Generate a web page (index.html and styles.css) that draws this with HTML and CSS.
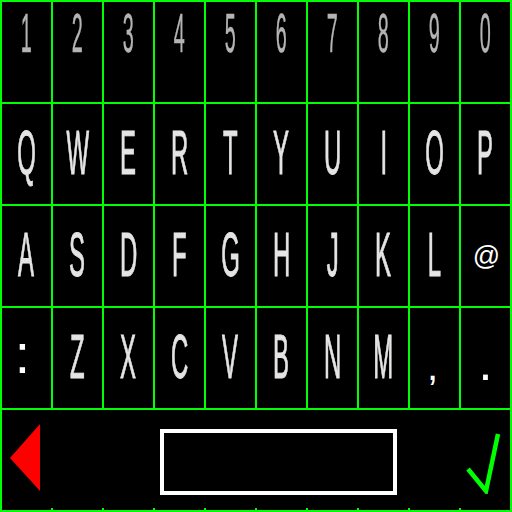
FILE: index.html
```html
<!DOCTYPE html>
<html>
<head>
<meta charset="utf-8">
<link rel="stylesheet" href="styles.css">
</head>
<body>
<div class="kb">
  <div class="key num"><span>1</span></div>
  <div class="key num"><span>2</span></div>
  <div class="key num"><span>3</span></div>
  <div class="key num"><span>4</span></div>
  <div class="key num"><span>5</span></div>
  <div class="key num"><span>6</span></div>
  <div class="key num"><span>7</span></div>
  <div class="key num"><span>8</span></div>
  <div class="key num"><span>9</span></div>
  <div class="key num"><span>0</span></div>

  <div class="key let"><span>Q</span></div>
  <div class="key let"><span>W</span></div>
  <div class="key let"><span>E</span></div>
  <div class="key let"><span>R</span></div>
  <div class="key let"><span>T</span></div>
  <div class="key let"><span>Y</span></div>
  <div class="key let"><span>U</span></div>
  <div class="key let"><span>I</span></div>
  <div class="key let"><span>O</span></div>
  <div class="key let"><span>P</span></div>

  <div class="key let"><span>A</span></div>
  <div class="key let"><span>S</span></div>
  <div class="key let"><span>D</span></div>
  <div class="key let"><span>F</span></div>
  <div class="key let"><span>G</span></div>
  <div class="key let"><span>H</span></div>
  <div class="key let"><span>J</span></div>
  <div class="key let"><span>K</span></div>
  <div class="key let"><span>L</span></div>
  <div class="key sym"><span class="at">@</span></div>

  <div class="key sym"><span class="colon">:</span></div>
  <div class="key let"><span>Z</span></div>
  <div class="key let"><span>X</span></div>
  <div class="key let"><span>C</span></div>
  <div class="key let"><span>V</span></div>
  <div class="key let"><span>B</span></div>
  <div class="key let"><span>N</span></div>
  <div class="key let"><span>M</span></div>
  <div class="key sym"><span class="comma">,</span></div>
  <div class="key sym"><span class="dot">.</span></div>

  <div class="key bar">
    <svg class="back" width="30" height="67" viewBox="0 0 30 67"><polygon points="0,34 30,0 30,67" fill="#ff0000"/></svg>
    <div class="field"></div>
    <svg class="ok" width="36" height="62" viewBox="0 0 36 62"><polyline points="2,37 20,59 32,2" fill="none" stroke="#00ff00" stroke-width="4.5" stroke-linejoin="miter"/></svg>
  </div>
</div>
</body>
</html>
```

FILE: styles.css
```css
html, body {
  margin: 0;
  padding: 0;
  background: #000;
}
.kb {
  width: 512px;
  height: 512px;
  box-sizing: border-box;
  display: grid;
  grid-template-columns: repeat(10, 1fr);
  grid-template-rows: repeat(5, 1fr);
  gap: 2px;
  padding: 2px;
  background: #00ff00;
  font-family: "Liberation Sans", Arial, sans-serif;
}
.key {
  background: #000;
  display: flex;
  justify-content: center;
  align-items: center;
  overflow: hidden;
}
.key span {
  display: block;
  line-height: 1;
}
.num {
  align-items: flex-start;
  padding-top: 4px;
}
.num span {
  font-size: 55px;
  color: #b4b4b4;
  -webkit-text-stroke: 0.5px #b4b4b4;
  transform: scaleX(0.36);
  filter: blur(0.6px);
}
.let span {
  font-size: 63px;
  color: #e4e4e4;
  -webkit-text-stroke: 1px #e4e4e4;
  transform: translateY(-2px) scaleX(0.38);
  filter: blur(0.6px);
}
.sym span {
  color: #fff;
}
.at {
  font-size: 27px;
  transform: translate(1px, 0);
}
.colon {
  font-size: 55px;
  transform: translate(-4px, -4px);
}
.comma {
  font-size: 40px;
  transform: translate(-2px, 8px);
}
.dot {
  font-size: 50px;
  transform: translate(0, 5px);
}
.bar {
  grid-column: 1 / -1;
  justify-content: flex-start;
  align-items: flex-start;
  background: #000 repeating-linear-gradient(to right, transparent 0 49px, #00ff00 49px 51px) left bottom / 100% 2px no-repeat;
}
.back {
  display: block;
  margin: 14px 0 0 8px;
}
.field {
  margin: 19px 0 0 120px;
  width: 229px;
  height: 58px;
  border: 4px solid #fff;
}
.ok {
  display: block;
  margin: 22px 0 0 69px;
}
```
